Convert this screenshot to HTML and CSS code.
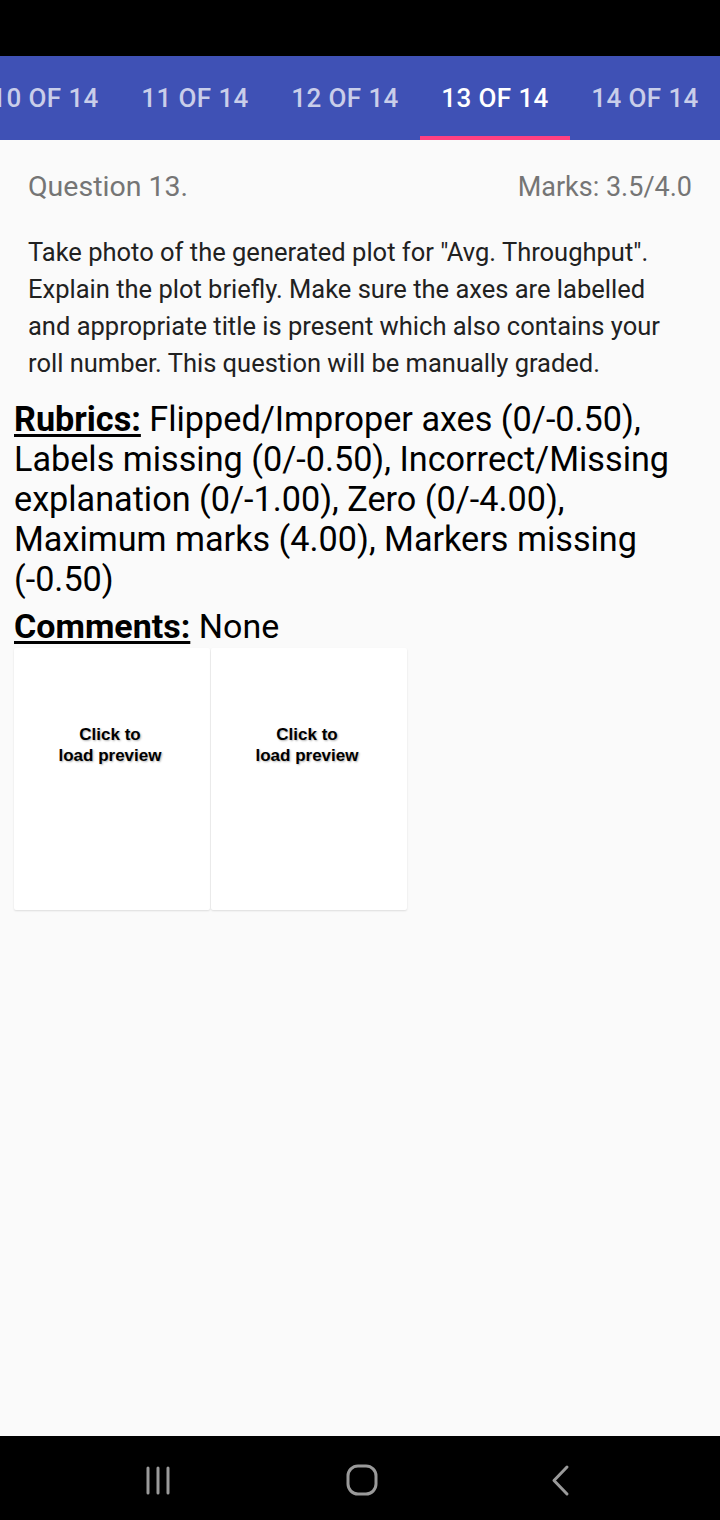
FILE: index.html
```html
<!DOCTYPE html>
<html>
<head>
<meta charset="utf-8">
<link rel="stylesheet" href="styles.css">
</head>
<body>
<div class="status"></div>
<div class="tabs">
  <div class="tab">10 OF 14</div>
  <div class="tab">11 OF 14</div>
  <div class="tab">12 OF 14</div>
  <div class="tab active">13 OF 14</div>
  <div class="tab">14 OF 14</div>
</div>
<main class="content">
  <div class="qhead">
    <span class="qtitle">Question 13.</span>
    <span class="marks">Marks: 3.5/4.0</span>
  </div>
  <p class="desc">Take photo of the generated plot for "Avg. Throughput". Explain the plot briefly. Make sure the axes are labelled and appropriate title is present which also contains your roll number. This question will be manually graded.</p>
  <p class="rubrics"><b class="lbl">Rubrics:</b> Flipped/Improper axes (0/-0.50), Labels missing (0/-0.50), Incorrect/Missing explanation (0/-1.00), Zero (0/-4.00), Maximum marks (4.00), Markers missing (-0.50)</p>
  <p class="comments"><b class="lbl">Comments:</b> None</p>
  <div class="previews">
    <div class="preview"><span>Click to<br>load preview</span></div>
    <div class="preview"><span>Click to<br>load preview</span></div>
  </div>
</main>
<div class="navbar">
  <svg class="nav-ic" width="30" height="32" viewBox="0 0 30 32"><g stroke="#9a9a9a" stroke-width="3" stroke-linecap="round"><line x1="3" y1="3" x2="3" y2="28"/><line x1="13" y1="3" x2="13" y2="28"/><line x1="23" y1="3" x2="23" y2="28"/></g></svg>
  <svg class="nav-ic" width="34" height="34" viewBox="0 0 34 34"><rect x="2" y="2" width="28" height="28" rx="10" fill="none" stroke="#9a9a9a" stroke-width="3"/></svg>
  <svg class="nav-ic" width="22" height="34" viewBox="0 0 22 34"><polyline points="17,3 4,16.5 17,30" fill="none" stroke="#9a9a9a" stroke-width="3" stroke-linecap="round" stroke-linejoin="round"/></svg>
</div>
</body>
</html>
```

FILE: styles.css
```css
* { box-sizing: border-box; }
html, body { margin: 0; padding: 0; }
body {
  width: 720px;
  height: 1520px;
  background: #fafafa;
  font-family: Roboto, "Noto Sans", sans-serif;
  display: flex;
  flex-direction: column;
  overflow: hidden;
}
.status { height: 56px; background: #000; flex: none; }
.tabs {
  height: 84px;
  background: #3f51b5;
  display: flex;
  flex: none;
  margin-left: -30px;
}
.tab {
  width: 150px;
  flex: none;
  display: flex;
  align-items: center;
  justify-content: center;
  color: rgba(255,255,255,0.72);
  font-size: 26px;
  font-weight: 500;
  letter-spacing: 0.4px;
  white-space: nowrap;
  border-bottom: 4px solid transparent;
  padding-top: 4px;
}
.tab.active { color: #fff; border-bottom-color: #ff4081; }
.content { flex: 1; padding: 0 14px; }
.qhead {
  display: flex;
  justify-content: space-between;
  align-items: baseline;
  padding: 29px 14px 0 14px;
  color: #757575;
  line-height: 36px;
}
.qtitle { font-size: 28.5px; }
.marks { font-size: 27px; }
.desc {
  margin: 29px 0 0;
  padding: 0 14px;
  font-size: 25.5px;
  line-height: 37px;
  color: #212121;
}
.rubrics {
  margin: 17px 0 0;
  font-size: 34.2px;
  line-height: 40px;
  color: #000;
}
.comments {
  margin: 7px 0 0;
  font-size: 34px;
  line-height: 40px;
  color: #000;
}
.lbl { font-weight: 700; text-decoration: underline; text-underline-offset: 3px; }
.previews { display: flex; gap: 1px; margin-top: 2px; }
.preview {
  width: 196px;
  height: 262px;
  background: #fff;
  box-shadow: 0 1px 2px rgba(0,0,0,0.12);
  border-radius: 2px;
  text-align: center;
  padding-top: 76px;
  padding-right: 4px;
  font-family: "Liberation Sans", Arial, sans-serif;
  font-weight: 700;
  font-size: 17px;
  line-height: 21px;
  color: #000;
  text-shadow: 1px 1px 2px rgba(0,0,0,0.3);
}
.navbar {
  height: 84px;
  background: #000;
  flex: none;
  display: flex;
  align-items: center;
  justify-content: space-between;
  padding: 6px 148px 0 145px;
}
.nav-ic { display: block; }
```
